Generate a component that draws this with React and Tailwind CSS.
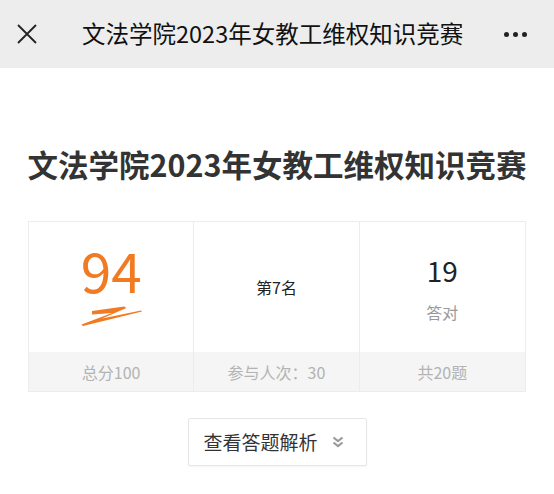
import React from 'react'

const font = { fontFamily: '"Noto Sans CJK SC", "Noto Sans", sans-serif' }

function Swoosh() {
  return (
    <svg width="62" height="22" viewBox="0 0 62 22" aria-hidden>
      <path
        d="M11 6 L43 1.5 L45.5 3 L21 13.5 L60 5.5 L61 6.5 L2 21 L0.5 19.5 L31 8 L11 9.5 Z"
        fill="#f07b23"
      />
    </svg>
  )
}

function Stat({ children, foot, last }) {
  return (
    <div className={`flex flex-col ${last ? '' : 'border-r border-[#ececec]'}`}>
      <div className="h-[130px] flex flex-col items-center justify-center">{children}</div>
      <div className="h-[39px] bg-[#f5f5f5] flex items-center justify-center text-[16px] text-[#b3b3b3]">
        {foot}
      </div>
    </div>
  )
}

export default function App() {
  return (
    <div className="w-[554px] h-[494px] bg-white overflow-hidden" style={font}>
      <div className="h-[68px] bg-[#ededed] flex items-center px-[17px]">
        <svg className="w-[20px] h-[20px] shrink-0" viewBox="0 0 20 20" fill="none" stroke="#222" strokeWidth="1.8" aria-hidden>
          <path d="M1 1 L19 19 M19 1 L1 19" />
        </svg>
        <div className="ml-[45px] text-[23.5px] text-[#111] leading-none whitespace-nowrap">
          文法学院2023年女教工维权知识竞赛
        </div>
        <div className="ml-auto mr-[10px] flex gap-[4px]">
          <span className="w-[5px] h-[5px] rounded-full bg-[#222]" />
          <span className="w-[5px] h-[5px] rounded-full bg-[#222]" />
          <span className="w-[5px] h-[5px] rounded-full bg-[#222]" />
        </div>
      </div>

      <h1 className="mt-[76px] text-center text-[30.5px] font-bold text-[#333] leading-[40px] whitespace-nowrap">
        文法学院2023年女教工维权知识竞赛
      </h1>

      <div className="mt-[37px] mx-[28px] border border-[#ececec] grid grid-cols-3">
        <Stat foot="总分100">
          <div className="text-[55px] font-normal text-[#f07b23] leading-none mt-[-6px]">94</div>
          <div className="mt-[8px] ml-[2px]">
            <Swoosh />
          </div>
        </Stat>
        <Stat foot="参与人次：30">
          <div className="text-[16px] text-[#222] mt-[0px]">第7名</div>
        </Stat>
        <Stat foot="共20题" last>
          <div className="text-[28px] text-[#222] leading-none mt-[6px]">19</div>
          <div className="text-[16px] text-[#999] mt-[16px]">答对</div>
        </Stat>
      </div>

      <div className="mt-[26px] flex justify-center">
        <button
          type="button"
          className="w-[179px] h-[48px] border border-[#e6e6e6] rounded-[2px] shadow-[0_1px_2px_rgba(0,0,0,0.04)] flex items-center pl-[15px] bg-white"
        >
          <span className="text-[19px] text-[#333] whitespace-nowrap">查看答题解析</span>
          <svg className="ml-[14px] w-[12px] h-[12px]" viewBox="0 0 12 12" fill="none" stroke="#9a9a9a" strokeWidth="2.2" aria-hidden>
            <path d="M1.5 1.5 L6 5 L10.5 1.5 M1.5 6.5 L6 10 L10.5 6.5" />
          </svg>
        </button>
      </div>
    </div>
  )
}
